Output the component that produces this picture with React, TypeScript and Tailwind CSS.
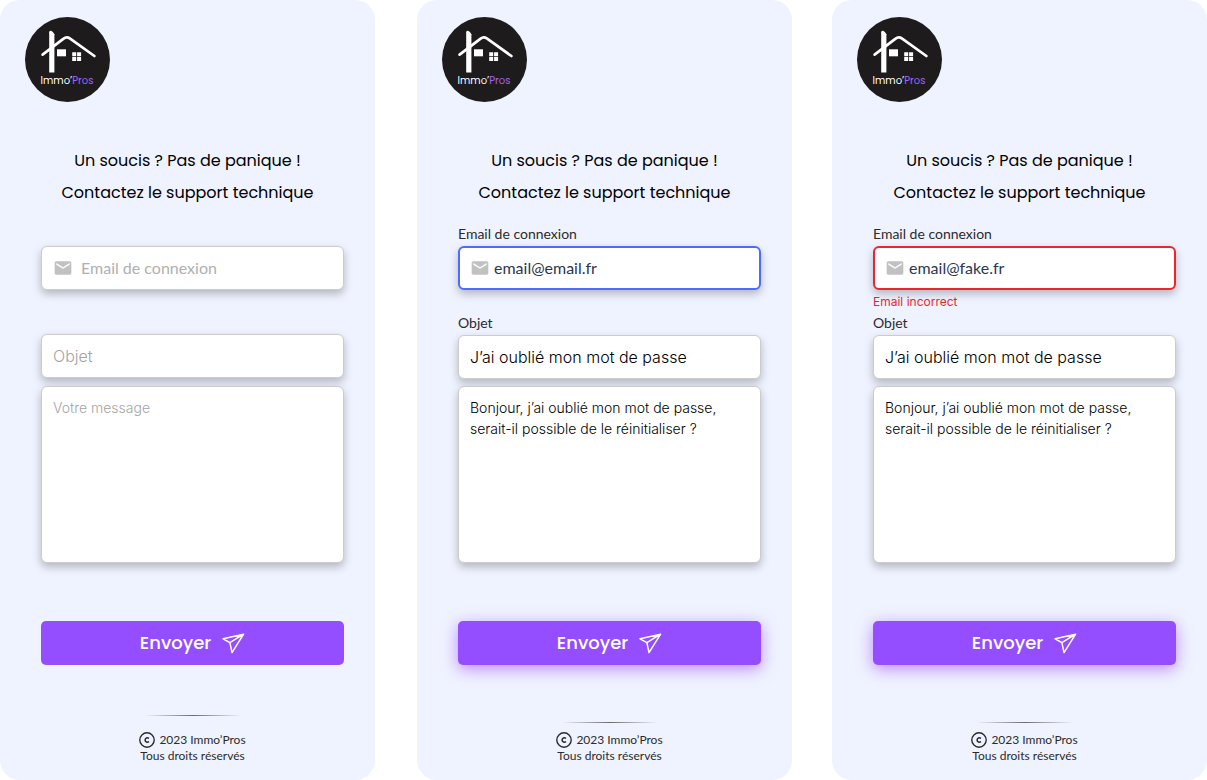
import { useId, useState } from "react";
import clsx from "clsx";
import { MdEmail } from "react-icons/md";

type Status = "idle" | "focus" | "error";

type SupportPanelProps = {
  status: Status;
  email?: string;
  subject?: string;
  message?: string;
  className?: string;
};

const sans = "font-['Inter','Liberation_Sans',sans-serif]";
const heading = "font-['Poppins','Inter',sans-serif]";
const lato = "font-['Lato','Liberation_Sans',sans-serif]";
const box =
  "w-full rounded-md border bg-white shadow-[0_4px_8px_rgba(0,0,0,0.25)] outline-none";

function Logo() {
  return (
    <svg viewBox="0 0 85 85" className="size-[85px]" role="img" aria-label="Immo’Pros">
      <circle cx="42.5" cy="42.5" r="42.5" fill="#1d1b1c" />
      <path d="M24.2 15.2Q24.4 13.6 26 13.8Q28.2 14.6 29.4 17.2V55.4H24.2Z" fill="#fff" />
      <path
        d="M17.6 37.6L38.6 21.6Q41.6 19.2 44.8 21.4L69.4 39"
        fill="none"
        stroke="#fff"
        strokeWidth="2.7"
        strokeLinecap="round"
      />
      <rect x="32" y="32.3" width="9" height="7" fill="#fff" />
      <path
        d="M47.2 35.3h4v3.9h-4zM52.1 35.3h4v3.9h-4zM47.2 40.1h4v3.9h-4zM52.1 40.1h4v3.9h-4z"
        fill="#fff"
      />
      <text x="42" y="67" fill="#fff" fontSize="10" textAnchor="middle" className={heading}>
        Immo’<tspan fill="#a566ff">Pros</tspan>
      </text>
    </svg>
  );
}

function SendIcon() {
  return (
    <svg
      viewBox="0 0 24 22"
      className="h-[22px] w-6"
      fill="none"
      stroke="currentColor"
      strokeWidth="1.5"
      strokeLinejoin="round"
      strokeLinecap="round"
      aria-hidden="true"
    >
      <path d="M22.6 2.2L2.1 6.8L8.9 10.7L11 20.6ZM8.9 10.7L22.6 2.2" />
    </svg>
  );
}

function CopyrightIcon() {
  return (
    <svg viewBox="0 0 16 16" className="size-4" fill="none" stroke="currentColor" aria-hidden="true">
      <circle cx="8" cy="8" r="7.2" strokeWidth="1.4" />
      <path d="M9.9 6.5A2.2 2.2 0 1 0 9.9 9.5" strokeWidth="1.5" />
    </svg>
  );
}

function SupportPanel({ status, email = "", subject = "", message = "", className }: SupportPanelProps) {
  const id = useId();
  const [values, setValues] = useState({ email, subject, message });
  const idle = status === "idle";
  const labelText = clsx(lato, "text-sm leading-4 text-[#2b2b2b]");

  return (
    <section
      className={clsx("flex min-h-screen flex-1 flex-col rounded-[20px] bg-[#eff3ff]", className)}
    >
      <header className="pt-[17px] pl-[25px]">
        <Logo />
      </header>

      <h1 className={clsx(heading, "mt-[43px] text-center text-base leading-8 text-black")}>
        Un soucis ? Pas de panique !
        <br />
        Contactez le support technique
      </h1>

      <form
        className="mt-[17px] flex flex-col pr-[31px] pl-[41px]"
        onSubmit={(e) => e.preventDefault()}
        noValidate
      >
        <div className="flex h-4 items-center">
          {!idle && (
            <label htmlFor={`${id}-email`} className={labelText}>
              Email de connexion
            </label>
          )}
        </div>
        <div
          className={clsx(
            box,
            "mt-1 flex h-11 items-center",
            idle && "gap-2 border-[#cccccc] px-[11px]",
            status === "focus" && "gap-1 border-2 border-[#4d6bff] px-[10px]",
            status === "error" && "gap-1 border-2 border-[#e8262b] px-[10px]",
          )}
        >
          <MdEmail className="size-5 shrink-0 text-[#c1c1c1]" aria-hidden="true" />
          <input
            id={`${id}-email`}
            type="email"
            aria-label={idle ? "Email de connexion" : undefined}
            placeholder="Email de connexion"
            value={values.email}
            aria-invalid={status === "error"}
            aria-describedby={status === "error" ? `${id}-error` : undefined}
            onChange={(e) => setValues({ ...values, email: e.target.value })}
            className={clsx(
              lato,
              "h-6 w-full min-w-0 text-base text-[#2d3650] outline-none placeholder:text-[#b0b0b0]",
            )}
          />
        </div>
        <div className="mt-1 h-4">
          {status === "error" && (
            <p id={`${id}-error`} className={clsx(sans, "text-xs leading-4 text-[#e8262b]")}>
              Email incorrect
            </p>
          )}
        </div>

        <div className={clsx("flex h-4 items-center", idle ? "mt-1" : "mt-[5px]")}>
          {!idle && (
            <label htmlFor={`${id}-subject`} className={labelText}>
              Objet
            </label>
          )}
        </div>
        <input
          id={`${id}-subject`}
          type="text"
          aria-label={idle ? "Objet" : undefined}
          placeholder="Objet"
          value={values.subject}
          onChange={(e) => setValues({ ...values, subject: e.target.value })}
          className={clsx(
            sans,
            box,
            "mt-1 h-11 border-[#cccccc] px-[11px] text-base font-light text-black placeholder:text-[#a3a3a3]",
          )}
        />

        <textarea
          id={`${id}-message`}
          aria-label="Votre message"
          placeholder="Votre message"
          value={values.message}
          onChange={(e) => setValues({ ...values, message: e.target.value })}
          className={clsx(
            sans,
            box,
            idle ? "mt-2" : "mt-[7px]",
            "h-[177px] resize-none border-[#cccccc] px-[11px] py-[10px] text-sm leading-[21px] font-light text-black placeholder:text-[#a3a3a3]",
          )}
        />

        <button
          type="submit"
          className={clsx(
            heading,
            "mt-[58px] flex h-11 w-full items-center justify-center gap-[10px] rounded-[5px] bg-[#944dff] text-lg font-medium text-white",
            !idle && "shadow-[0_4px_16px_rgba(150,50,255,0.55)]",
          )}
        >
          Envoyer
          <SendIcon />
        </button>
      </form>

      <footer
        className={clsx(
          lato,
          "mt-auto flex flex-col items-center pt-8 pr-[31px] pb-4 pl-[41px] text-xs leading-4 text-[#2b2b2b]",
        )}
      >
        <div
          className={clsx(
            "h-px w-24 bg-linear-to-r from-transparent via-[#6b6b6b] to-transparent",
            idle ? "mb-4" : "mb-[9px]",
          )}
        />
        <p className="flex items-center gap-1">
          <CopyrightIcon />
          2023 Immo’Pros
        </p>
        <p>Tous droits réservés</p>
      </footer>
    </section>
  );
}

export default function App() {
  const subject = "J’ai oublié mon mot de passe";
  const message = "Bonjour, j’ai oublié mon mot de passe,\nserait-il possible de le réinitialiser ?";

  return (
    <main className="flex min-h-screen bg-white">
      <SupportPanel status="idle" />
      <SupportPanel
        status="focus"
        email="email@email.fr"
        subject={subject}
        message={message}
        className="ml-[42px]"
      />
      <SupportPanel
        status="error"
        email="email@fake.fr"
        subject={subject}
        message={message}
        className="ml-10"
      />
    </main>
  );
}
